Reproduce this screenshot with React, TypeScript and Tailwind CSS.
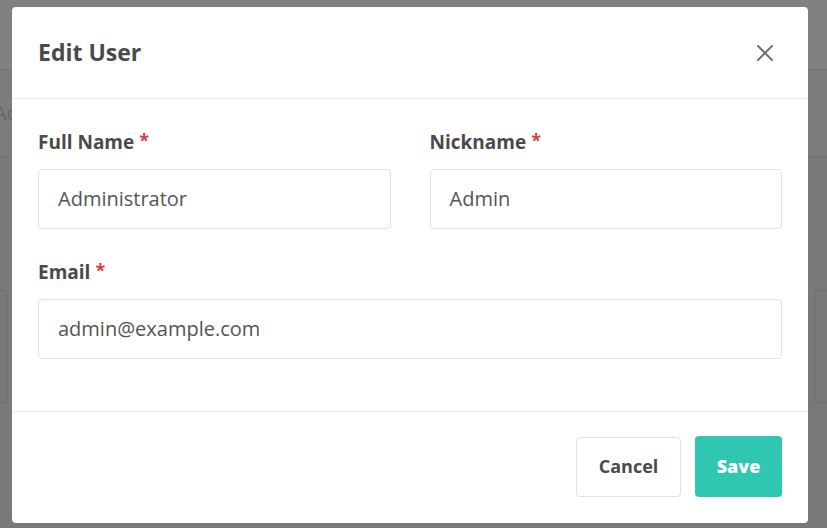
import React from "react";

function Field({ label, value }: { label: string; value: string }) {
  return (
    <div className="flex flex-col">
      <div className="flex items-start h-[40px] text-[19px] font-bold text-[#4a4a4a] leading-[26px]">
        <span>{label}</span>
        <span className="ml-[5px] text-[#e0383e] text-[18px] leading-[22px]">*</span>
      </div>
      <div className="h-[60px] border border-[#dde2e8] rounded-[4px] flex items-center px-[19px] text-[20px] text-[#555555]">
        {value}
      </div>
    </div>
  );
}

export default function App() {
  return (
    <div
      className="relative w-[827px] h-[528px] overflow-hidden bg-[#797979]"
      style={{ fontFamily: '"Open Sans", "Noto Sans", sans-serif' }}
    >
      {/* dimmed page behind */}
      <div className="flex flex-col">
        <div className="h-[70px] bg-[#818181] border-b border-[#747474]" />
        <div className="h-[87px] bg-[#7c7c7c] border-b border-[#727272] flex items-center">
          <span className="text-[20px] text-[#5f6a72] ml-[-6px]">Ac</span>
        </div>
        <div className="flex justify-between mt-[133px]">
          <div className="w-[7px] h-[113px] border border-l-0 border-[#6e6e6e] rounded-r-[3px]" />
          <div className="w-[13px] h-[113px] border border-r-0 border-[#6e6e6e] rounded-l-[3px]" />
        </div>
      </div>

      {/* modal */}
      <div className="absolute left-[12px] top-[7px] w-[796px] h-[516px] bg-white rounded-[4px] flex flex-col">
        <div className="h-[92px] flex items-center justify-between pl-[26px] pr-[34px] border-b border-[#e9ecef]">
          <h2 className="text-[23px] font-bold text-[#4a4a4a] leading-none">Edit User</h2>
          <svg width="18" height="18" viewBox="0 0 18 18" className="text-[#737373]">
            <path d="M2 2 L16 16 M16 2 L2 16" stroke="currentColor" strokeWidth="2" strokeLinecap="round" />
          </svg>
        </div>
        <div className="flex-1 px-[26px] pt-[30px] flex flex-col gap-[30px]">
          <div className="grid grid-cols-2 gap-x-[39px]">
            <Field label="Full Name" value="Administrator" />
            <Field label="Nickname" value="Admin" />
          </div>
          <Field label="Email" value="admin@example.com" />
        </div>
        <div className="h-[112px] border-t border-[#e9ecef] flex items-center justify-end gap-[14px] pr-[26px] pb-[2px]">
          <button className="w-[105px] h-[60px] border border-[#dde2e8] rounded-[4px] bg-white text-[18px] font-bold text-[#4a4a4a]">
            Cancel
          </button>
          <button className="w-[87px] h-[61px] rounded-[4px] bg-[#2fc6b2] text-[18px] font-extrabold text-white">
            Save
          </button>
        </div>
      </div>
    </div>
  );
}
